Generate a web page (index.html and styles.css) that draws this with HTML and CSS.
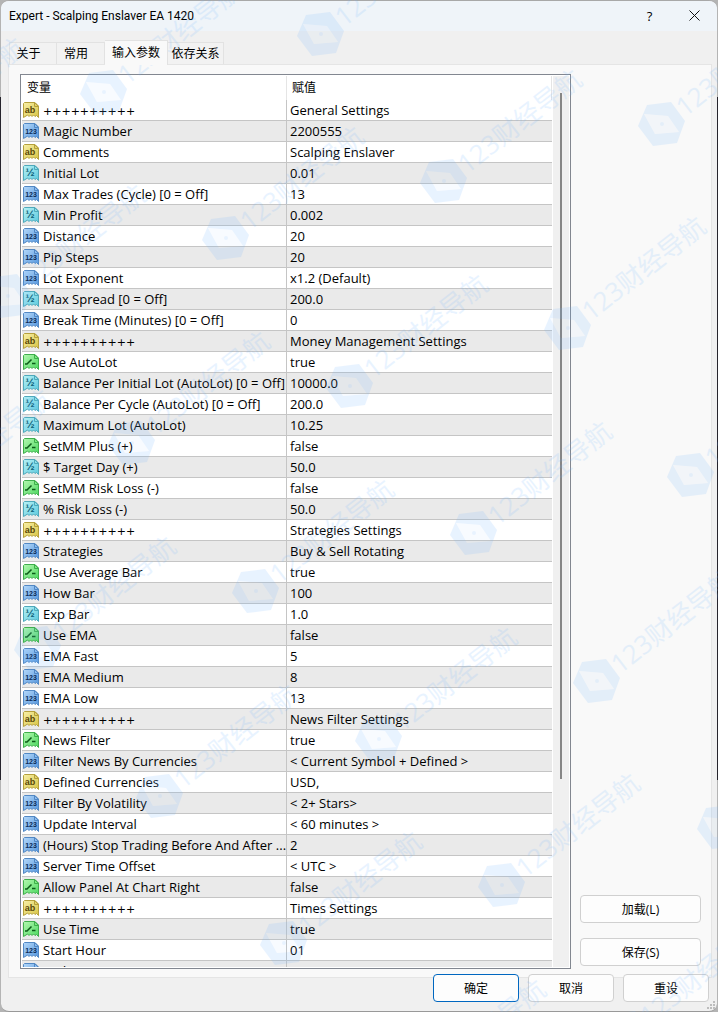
FILE: index.html
```
<!DOCTYPE html>
<html lang="zh-CN">
<head>
  <meta charset="UTF-8" />
  <meta name="viewport" content="width=device-width, initial-scale=1.0"/>
  <title>Expert - Scalping Enslaver EA 1420</title>
  <link rel="stylesheet" href="styles.css">
</head>
<body>

  <!-- Icon shapes -->
  <svg class="defs" width="0" height="0" aria-hidden="true">
    <defs>
      <linearGradient id="gBlue" x1="0" y1="0" x2="1" y2="1"><stop offset="0" stop-color="#b4d8fa"/><stop offset="1" stop-color="#5596dc"/></linearGradient>
      <linearGradient id="gYellow" x1="0" y1="0" x2="1" y2="1"><stop offset="0" stop-color="#f8f0a8"/><stop offset="1" stop-color="#d8c445"/></linearGradient>
      <linearGradient id="gCyan" x1="0" y1="0" x2="1" y2="1"><stop offset="0" stop-color="#b8f2f6"/><stop offset="1" stop-color="#5cc8dc"/></linearGradient>
      <linearGradient id="gGreen" x1="0" y1="0" x2="1" y2="1"><stop offset="0" stop-color="#b4f8b0"/><stop offset="1" stop-color="#4cd860"/></linearGradient>
      <path id="sheet" d="M1.5 .5H12L15.5 4V15.5L13.5 13.5L12 14.5L10.5 13L9 14.5L7.5 13L6 14.5L4.5 13L3 14L.5 15.500V1.500Z"/>
      <path id="fold" d="M11.500 .5V4.500H15.500Z"/>
    </defs>
    <symbol id="int" viewBox="0 0 16 16">
      <use href="#sheet" fill="url(#gBlue)" stroke="#5288c4"/>
      <use href="#fold" fill="#8dbdf0" stroke="#5288c4"/>
      <text x="8" y="11" class="glyph" font-size="7" fill="#0c2c58">123</text>
    </symbol>
    <symbol id="str" viewBox="0 0 16 16">
      <use href="#sheet" fill="url(#gYellow)" stroke="#b5a03c"/>
      <use href="#fold" fill="#e4d46c" stroke="#b5a03c"/>
      <text x="7" y="11" class="glyph" font-size="9" fill="#584808">ab</text>
    </symbol>
    <symbol id="dbl" viewBox="0 0 16 16">
      <use href="#sheet" fill="url(#gCyan)" stroke="#4fa9bb"/>
      <use href="#fold" fill="#8cdfea" stroke="#4fa9bb"/>
      <text x="7" y="11" class="glyph" font-size="11" fill="#0c6078">½</text>
    </symbol>
    <symbol id="bool" viewBox="0 0 16 16">
      <use href="#sheet" fill="url(#gGreen)" stroke="#3fae4c"/>
      <use href="#fold" fill="#7cec80" stroke="#3fae4c"/>
      <path d="M2 10H4L8.500 5.500M9 9.500H12.500" fill="none" stroke="#0b5c18" stroke-width="1.500"/>
    </symbol>
    <symbol id="mark" viewBox="-30 -110 190 150" overflow="visible">
      <path d="M-24 2L-15 -19L9 -22L23 -3L15 19L-9 22ZM-18 -10L-7 10L17 8L6 -8Z" fill-rule="evenodd"/>
      <path d="M-18 -10L-7 10L17 8L6 -8Z" opacity=".3"/>
      <circle r="2"/>
      <text x="22" y="9" class="mark-text" transform="rotate(-38)">123财经导航</text>
    </symbol>
  </svg>

  <main class="dialog">
    <header class="titlebar">
      <h1>Expert - Scalping Enslaver EA 1420</h1>
      <button class="title-btn" aria-label="Help">?</button>
      <button class="title-btn" aria-label="Close">
        <svg width="11" height="11" viewBox="0 0 11 11"><path d="M.5 .5L10.500 10.500M10.500 .5L.5 10.500" stroke="#111" fill="none"/></svg>
      </button>
    </header>

    <nav class="tabs" role="tablist">
      <button class="tab" role="tab">关于</button>
      <button class="tab" role="tab">常用</button>
      <button class="tab active" role="tab" aria-selected="true">输入参数</button>
      <button class="tab last" role="tab">依存关系</button>
    </nav>

    <section class="panel">
      <div class="list">
        <div class="rows">
          <table>
            <thead>
              <tr><th>变量</th><th>赋值</th></tr>
            </thead>
            <tbody>
              <tr><td><svg class="icon"><use href="#str"/></svg><span class="plus">++++++++++</span></td><td>General Settings</td></tr>
              <tr><td><svg class="icon"><use href="#int"/></svg>Magic Number</td><td>2200555</td></tr>
              <tr><td><svg class="icon"><use href="#str"/></svg>Comments</td><td>Scalping Enslaver</td></tr>
              <tr><td><svg class="icon"><use href="#dbl"/></svg>Initial Lot</td><td>0.01</td></tr>
              <tr><td><svg class="icon"><use href="#int"/></svg>Max Trades (Cycle) [0 = Off]</td><td>13</td></tr>
              <tr><td><svg class="icon"><use href="#dbl"/></svg>Min Profit</td><td>0.002</td></tr>
              <tr><td><svg class="icon"><use href="#int"/></svg>Distance</td><td>20</td></tr>
              <tr><td><svg class="icon"><use href="#int"/></svg>Pip Steps</td><td>20</td></tr>
              <tr><td><svg class="icon"><use href="#int"/></svg>Lot Exponent</td><td>x1.2 (Default)</td></tr>
              <tr><td><svg class="icon"><use href="#dbl"/></svg>Max Spread [0 = Off]</td><td>200.0</td></tr>
              <tr><td><svg class="icon"><use href="#int"/></svg>Break Time (Minutes) [0 = Off]</td><td>0</td></tr>
              <tr><td><svg class="icon"><use href="#str"/></svg><span class="plus">++++++++++</span></td><td>Money Management Settings</td></tr>
              <tr><td><svg class="icon"><use href="#bool"/></svg>Use AutoLot</td><td>true</td></tr>
              <tr><td><svg class="icon"><use href="#dbl"/></svg>Balance Per Initial Lot (AutoLot) [0 = Off]</td><td>10000.0</td></tr>
              <tr><td><svg class="icon"><use href="#dbl"/></svg>Balance Per Cycle (AutoLot) [0 = Off]</td><td>200.0</td></tr>
              <tr><td><svg class="icon"><use href="#dbl"/></svg>Maximum Lot (AutoLot)</td><td>10.25</td></tr>
              <tr><td><svg class="icon"><use href="#bool"/></svg>SetMM Plus (+)</td><td>false</td></tr>
              <tr><td><svg class="icon"><use href="#dbl"/></svg>$ Target Day (+)</td><td>50.0</td></tr>
              <tr><td><svg class="icon"><use href="#bool"/></svg>SetMM Risk Loss (-)</td><td>false</td></tr>
              <tr><td><svg class="icon"><use href="#dbl"/></svg>% Risk Loss (-)</td><td>50.0</td></tr>
              <tr><td><svg class="icon"><use href="#str"/></svg><span class="plus">++++++++++</span></td><td>Strategies Settings</td></tr>
              <tr><td><svg class="icon"><use href="#int"/></svg>Strategies</td><td>Buy &amp; Sell Rotating</td></tr>
              <tr><td><svg class="icon"><use href="#bool"/></svg>Use Average Bar</td><td>true</td></tr>
              <tr><td><svg class="icon"><use href="#int"/></svg>How Bar</td><td>100</td></tr>
              <tr><td><svg class="icon"><use href="#dbl"/></svg>Exp Bar</td><td>1.0</td></tr>
              <tr><td><svg class="icon"><use href="#bool"/></svg>Use EMA</td><td>false</td></tr>
              <tr><td><svg class="icon"><use href="#int"/></svg>EMA Fast</td><td>5</td></tr>
              <tr><td><svg class="icon"><use href="#int"/></svg>EMA Medium</td><td>8</td></tr>
              <tr><td><svg class="icon"><use href="#int"/></svg>EMA Low</td><td>13</td></tr>
              <tr><td><svg class="icon"><use href="#str"/></svg><span class="plus">++++++++++</span></td><td>News Filter Settings</td></tr>
              <tr><td><svg class="icon"><use href="#bool"/></svg>News Filter</td><td>true</td></tr>
              <tr><td><svg class="icon"><use href="#int"/></svg>Filter News By Currencies</td><td>&lt; Current Symbol + Defined &gt;</td></tr>
              <tr><td><svg class="icon"><use href="#str"/></svg>Defined Currencies</td><td>USD,</td></tr>
              <tr><td><svg class="icon"><use href="#int"/></svg>Filter By Volatility</td><td>&lt; 2+ Stars&gt;</td></tr>
              <tr><td><svg class="icon"><use href="#int"/></svg>Update Interval</td><td>&lt; 60 minutes &gt;</td></tr>
              <tr><td><svg class="icon"><use href="#int"/></svg>(Hours) Stop Trading Before And After ...</td><td>2</td></tr>
              <tr><td><svg class="icon"><use href="#int"/></svg>Server Time Offset</td><td>&lt; UTC &gt;</td></tr>
              <tr><td><svg class="icon"><use href="#bool"/></svg>Allow Panel At Chart Right</td><td>false</td></tr>
              <tr><td><svg class="icon"><use href="#str"/></svg><span class="plus">++++++++++</span></td><td>Times Settings</td></tr>
              <tr><td><svg class="icon"><use href="#bool"/></svg>Use Time</td><td>true</td></tr>
              <tr><td><svg class="icon"><use href="#int"/></svg>Start Hour</td><td>01</td></tr>
              <tr><td><svg class="icon"><use href="#int"/></svg>End Hour</td><td></td></tr>
            </tbody>
          </table>
        </div>
        <div class="scrollbar"><div class="thumb"></div></div>
      </div>

      <div class="side">
        <button class="btn">加载(L)</button>
        <button class="btn">保存(S)</button>
      </div>
    </section>

    <footer class="actions">
      <button class="btn primary">确定</button>
      <button class="btn">取消</button>
      <button class="btn">重设</button>
    </footer>

    <svg class="grip" width="8" height="8" viewBox="0 0 8 8" aria-hidden="true">
      <path d="M6 0h2v2h-2zM3 3h2v2h-2zM6 3h2v2h-2zM0 6h2v2h-2zM3 6h2v2h-2zM6 6h2v2h-2z" fill="#bdbdbd"/>
    </svg>
  </main>

  <!-- Watermark -->
  <svg class="watermark" aria-hidden="true">
    <use href="#mark" x="-143" y="39" width="190" height="150"/>
    <use href="#mark" x="74" y="-18" width="190" height="150"/>
    <use href="#mark" x="291" y="-76" width="190" height="150"/>
    <use href="#mark" x="-22" y="186" width="190" height="150"/>
    <use href="#mark" x="196" y="128" width="190" height="150"/>
    <use href="#mark" x="414" y="71" width="190" height="150"/>
    <use href="#mark" x="632" y="14" width="190" height="150"/>
    <use href="#mark" x="-116" y="391" width="190" height="150"/>
    <use href="#mark" x="102" y="333" width="190" height="150"/>
    <use href="#mark" x="320" y="276" width="190" height="150"/>
    <use href="#mark" x="538" y="218" width="190" height="150"/>
    <use href="#mark" x="8" y="538" width="190" height="150"/>
    <use href="#mark" x="226" y="481" width="190" height="150"/>
    <use href="#mark" x="444" y="423" width="190" height="150"/>
    <use href="#mark" x="661" y="365" width="190" height="150"/>
    <use href="#mark" x="130" y="686" width="190" height="150"/>
    <use href="#mark" x="349" y="629" width="190" height="150"/>
    <use href="#mark" x="567" y="571" width="190" height="150"/>
    <use href="#mark" x="254" y="833" width="190" height="150"/>
    <use href="#mark" x="472" y="775" width="190" height="150"/>
    <use href="#mark" x="691" y="717" width="190" height="150"/>
    <use href="#mark" x="378" y="981" width="190" height="150"/>
    <use href="#mark" x="596" y="923" width="190" height="150"/>
  </svg>

</body>
</html>
```
FILE: styles.css
```
* {
  margin: 0;
  padding: 0;
  box-sizing: border-box;
}

body {
  font-family: "Open Sans", "Noto Sans CJK SC", sans-serif;
  font-size: 12px;
  color: #000;
  background: linear-gradient(#b4b4b4 97px, #26242c 97px, #26242c 780px, #b4b4b4 780px);
}

button {
  font: inherit;
  color: inherit;
  background: none;
  border: none;
}

.defs {
  position: absolute;
}

.dialog {
  position: relative;
  display: flex;
  flex-direction: column;
  height: 100vh;
  margin: 0 1px;
  border-top: 1px solid #a8a8a8;
  border-bottom: 1px solid #999;
  border-radius: 8px;
  background: #f0f0f0;
  overflow: hidden;
}

/* Title bar */
.titlebar {
  display: flex;
  align-items: center;
  height: 30px;
  padding-left: 8px;
  background: #eff4f9;
}

.titlebar h1 {
  flex: 1;
  font-family: Roboto, sans-serif;
  font-size: 12px;
  font-weight: normal;
}

.title-btn {
  width: 45px;
  height: 28px;
  font-size: 13px;
}

/* Tabs */
.tabs {
  display: flex;
  align-items: flex-end;
  height: 33px;
  padding-left: 8px;
}

.tab {
  width: 48px;
  height: 22px;
  padding-right: 9px;
  border: 1px solid #e2e2e2;
  border-bottom: none;
  background: #f2f2f2;
  line-height: 20px;
  white-space: nowrap;
}

.tab + .tab {
  border-left: none;
}

.tab.active {
  width: 63px;
  height: 25px;
  padding: 0;
  margin-bottom: -1px;
  background: #f9f9f9;
  z-index: 1;
}

.tab.last {
  width: 56px;
  padding: 0;
}

/* Panel */
.panel {
  flex: 1;
  min-height: 0;
  display: flex;
  gap: 9px;
  margin: 0 5px 0 7px;
  padding: 9px 10px 8px 11px;
  border: 1px solid #e5e5e5;
  background: #f9f9f9;
}

.list {
  flex: 1;
  display: flex;
  padding: 1px;
  border: 1px solid #828790;
  background: #fff;
}

.rows {
  flex: 1;
  overflow: hidden;
}

table {
  width: 100%;
  table-layout: fixed;
  border-collapse: separate;
  border-spacing: 0;
}

th {
  width: 50%;
  height: 24px;
  padding-left: 5px;
  border-right: 1px solid #e5e5e5;
  font-weight: normal;
  line-height: 20px;
  text-align: left;
}

td {
  height: 21px;
  padding-left: 3px;
  border-bottom: 1px solid #c5c5c5;
  font-size: 13px;
  line-height: 20px;
  white-space: nowrap;
  overflow: hidden;
}

td:first-child {
  padding-left: 1px;
  border-right: 1px solid #c5c5c5;
}

tr:nth-child(even) td {
  background: #eaeaea;
}

.icon {
  float: left;
  width: 16px;
  height: 16px;
  margin: 2px 4px 0 0;
}

.glyph {
  font-family: "Liberation Sans", sans-serif;
  font-weight: bold;
  text-anchor: middle;
}

.plus {
  font-family: "DejaVu Sans", sans-serif;
  font-size: 11px;
  line-height: 1;
}

.scrollbar {
  width: 17px;
  padding: 17px 0 17px 7px;
  border-left: 1px solid #fff;
  background: #f0f0f0;
}

.thumb {
  width: 2px;
  height: 80%;
  background: #868686;
}

/* Buttons */
.side {
  display: flex;
  flex-direction: column;
  justify-content: flex-end;
  gap: 15px;
  width: 121px;
  padding-bottom: 3px;
}

.btn {
  height: 28px;
  border: 1px solid #d0d0d0;
  border-radius: 4px;
  background: #fdfdfd;
}

.actions {
  display: flex;
  justify-content: flex-end;
  gap: 9px;
  margin-top: -4px;
  padding: 0 8px 9px;
}

.actions .btn {
  width: 86px;
}

.btn.primary {
  border-color: #0067c0;
}

.grip {
  position: absolute;
  right: 2px;
  bottom: 2px;
}

/* Watermark */
.watermark {
  position: absolute;
  top: 0;
  left: 0;
  width: 100%;
  height: 100%;
  fill: #6eb4ff;
  opacity: .15;
  pointer-events: none;
}

.mark-text {
  font-size: 26px;
}
```
